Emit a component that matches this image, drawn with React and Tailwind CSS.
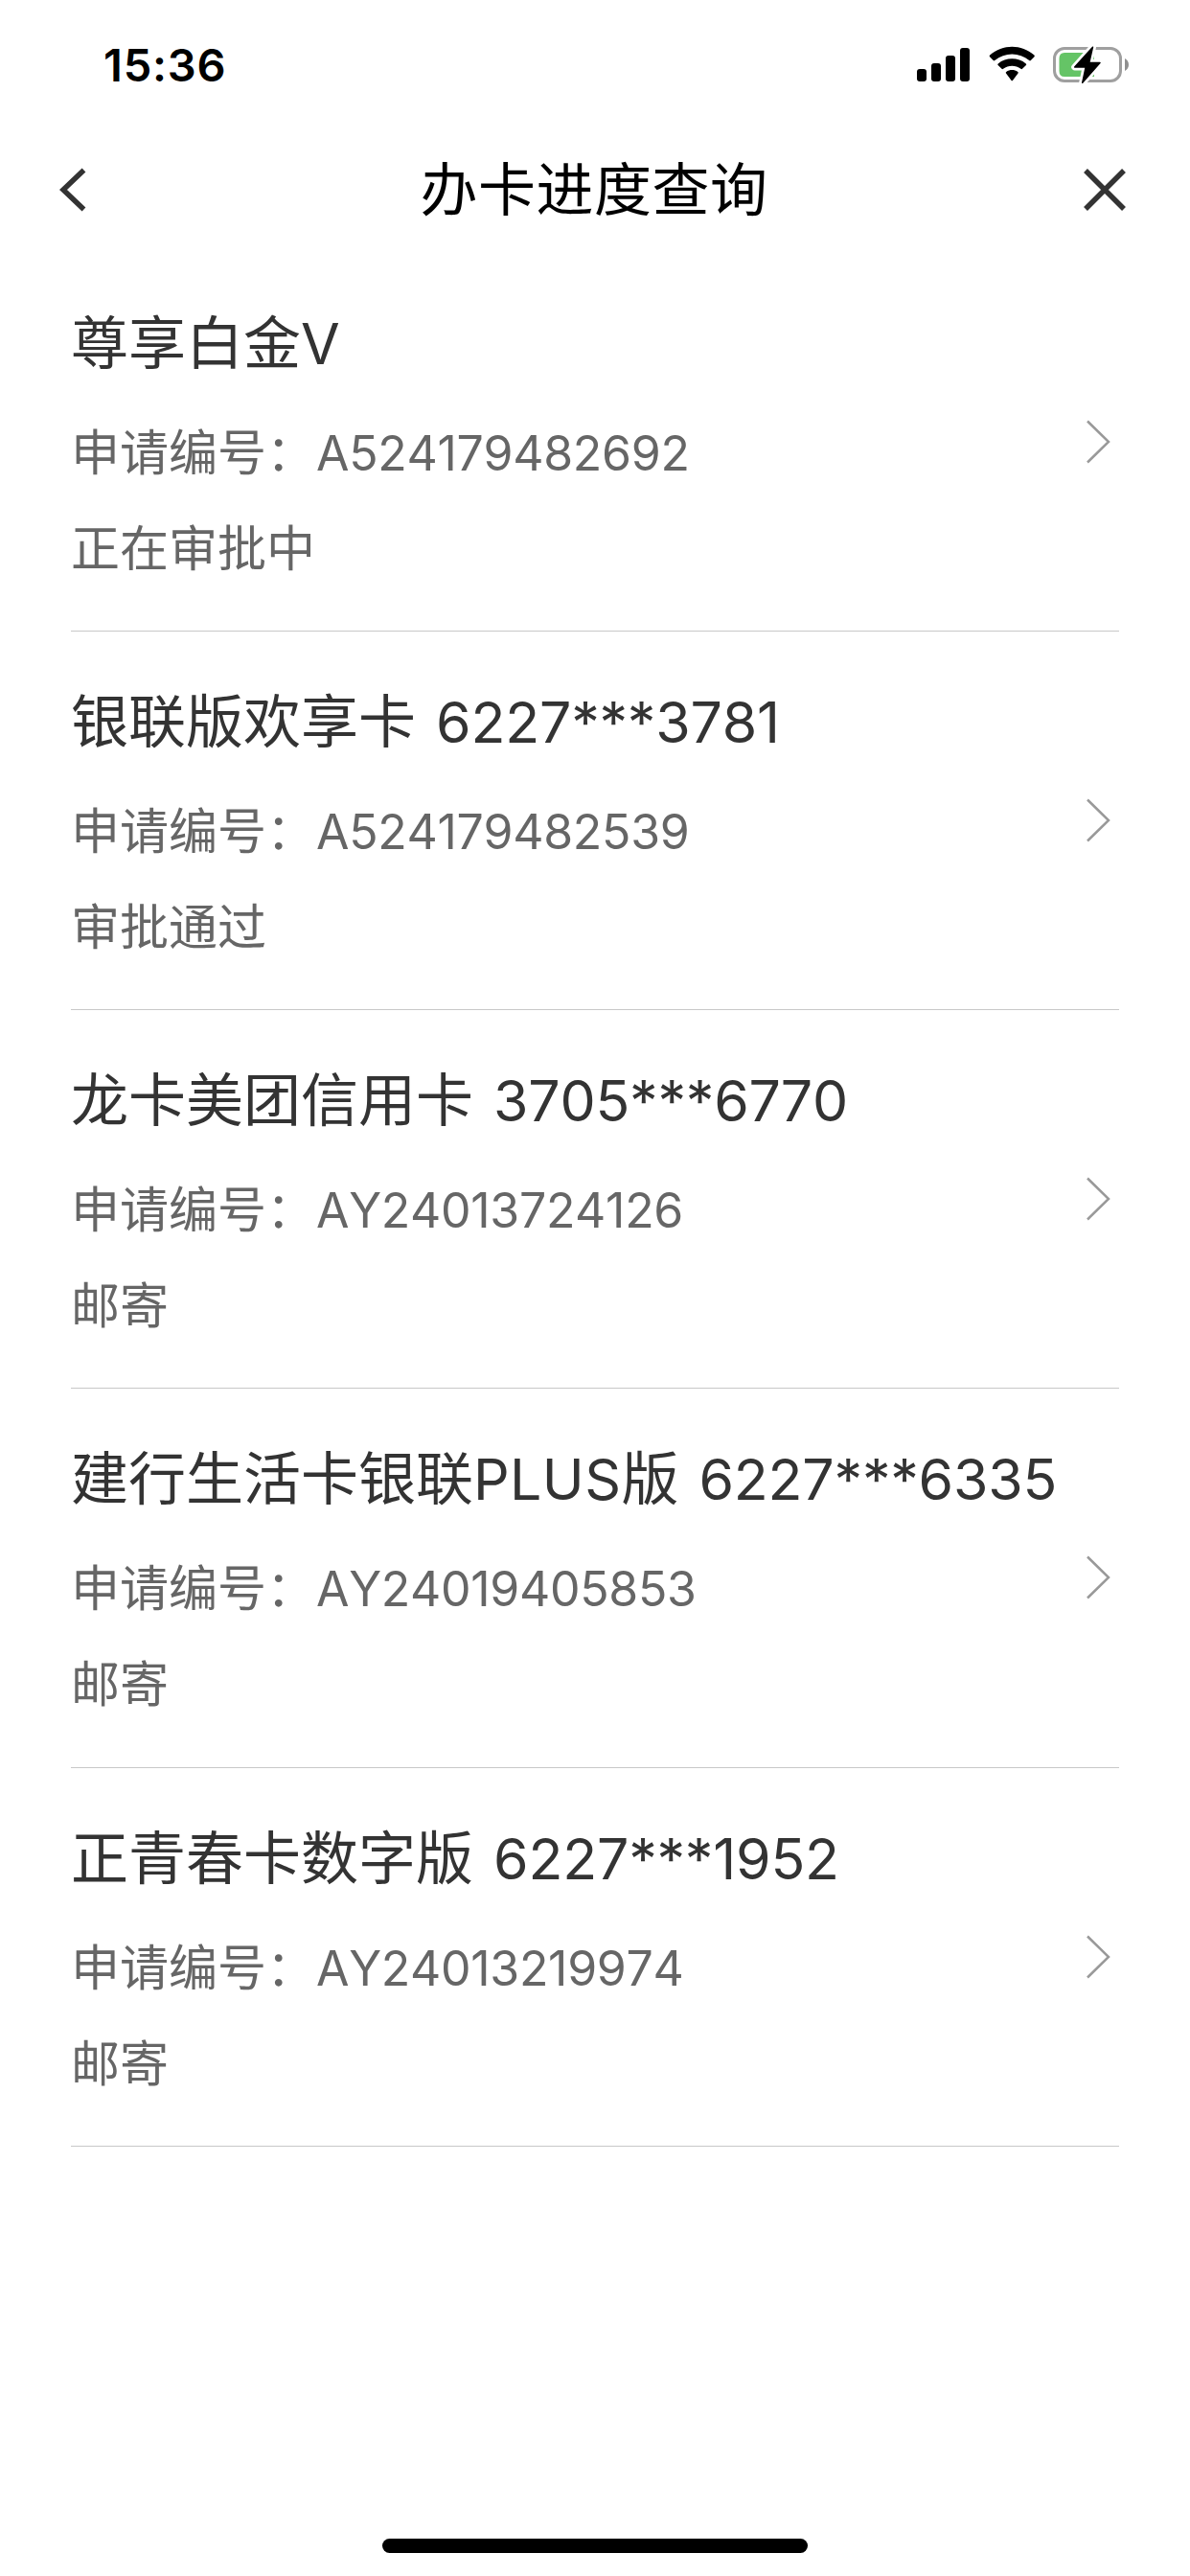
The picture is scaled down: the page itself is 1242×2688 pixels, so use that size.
const cards = [
  { title: "尊享白金", latin: "V", no: "A524179482692", status: "正在审批中" },
  { title: "银联版欢享卡", mask: "6227***3781", no: "A524179482539", status: "审批通过" },
  { title: "龙卡美团信用卡", mask: "3705***6770", no: "AY24013724126", status: "邮寄" },
  { title: "建行生活卡银联", latin: "PLUS", tail: "版", mask: "6227***6335", no: "AY24019405853", status: "邮寄" },
  { title: "正青春卡数字版", mask: "6227***1952", no: "AY24013219974", status: "邮寄" },
];

export default function App() {
  return (
    <div className="w-[1242px] h-[2688px] bg-white flex flex-col overflow-hidden font-['Inter','Noto_Sans_CJK_SC',sans-serif]">
      <StatusBar />
      <NavBar />
      <main className="flex-1 pl-[74px] pr-[74px]">
        {cards.map((c) => (
          <CardRow key={c.no} card={c} />
        ))}
      </main>
      <div className="w-[444px] h-[15px] mb-[24px] mx-auto rounded-full bg-black shrink-0" />
    </div>
  );
}

function StatusBar() {
  return (
    <header className="h-[132px] shrink-0 flex items-start justify-between pl-[108px] pr-[62px]">
      <span className="mt-[38px] text-[47px] leading-[60px] font-semibold tracking-[0.8px] text-black">15:36</span>
      <div className="mt-[48px] flex">
        <svg width="56" height="40" viewBox="0 0 56 40" className="mr-[19px]">
          <rect x="0" y="24" width="10" height="13" rx="3" />
          <rect x="15" y="18" width="10" height="19" rx="3" />
          <rect x="30" y="10" width="10" height="27" rx="3" />
          <rect x="45" y="2" width="10" height="35" rx="3" />
        </svg>
        <svg width="50" height="40" viewBox="0 0 50 40" className="mr-[17px]">
          <path d="M1 11.2 Q0.3 10.4 1.1 9.6 C14.5 -2.2 34 -2.2 47.4 9.6 Q48.2 10.4 47.5 11.2 L43.8 15 Q43 15.8 42.2 15 C32 6.2 16.5 6.2 6.3 15 Q5.5 15.8 4.7 15 Z" />
          <path d="M9.6 20 Q8.8 19.2 9.7 18.4 C18 11.6 30.5 11.6 38.8 18.4 Q39.7 19.2 38.9 20 L35 23.8 Q34.3 24.5 33.4 23.8 C28 19.6 20.5 19.6 15.1 23.8 Q14.2 24.5 13.5 23.8 Z" />
          <path d="M18 28.4 Q17.3 27.6 18.2 27 C21.8 24.4 26.7 24.4 30.3 27 Q31.2 27.6 30.5 28.4 L25.1 35.8 Q24.25 36.8 23.4 35.8 Z" />
        </svg>
        <svg width="81" height="40" viewBox="0 0 81 40">
          <rect x="1.5" y="2.5" width="69" height="34" rx="10.5" fill="none" stroke="#9f9f9f" strokeWidth="3" />
          <path d="M75 13 C80.3 15.5 80.3 23.5 75 26 Z" fill="#8f8f8f" />
          <path d="M12 7 H43 V32 H12 Q6.5 32 6.5 26 V13 Q6.5 7 12 7 Z" fill="#65c466" />
          <path d="M41.5 1.2 L22.7 22 H34.2 L30.7 38.3 L49 17.5 H37.7 Z" fill="#fff" stroke="#fff" strokeWidth="7" strokeLinejoin="round" />
          <path d="M41.5 1.2 L22.7 22 H34.2 L30.7 38.3 L49 17.5 H37.7 Z" fill="#000" stroke="#000" strokeWidth="1.5" strokeLinejoin="round" />
        </svg>
      </div>
    </header>
  );
}

function NavBar() {
  return (
    <nav className="h-[131.8px] shrink-0 flex items-center justify-between pl-[60px] pr-[66px]">
      <svg width="48" height="48" viewBox="0 0 48 48" fill="none" stroke="#333" strokeWidth="5.5">
        <path d="M27.5 3.5 L6 24 L27.5 44.5" />
      </svg>
      <h1 className="ml-[4px] text-[60px] leading-[84px] tracking-[0.5px] text-black">办卡进度查询</h1>
      <svg width="48" height="48" viewBox="0 0 48 48" fill="none" stroke="#333" strokeWidth="5.5">
        <path d="M5 4 L45 44 M45 4 L5 44" />
      </svg>
    </nav>
  );
}

function CardRow({ card }) {
  return (
    <section className="h-[395.2px] border-b border-[#c8c8c8] flex items-center justify-between">
      <div className="h-full pt-[52px] whitespace-nowrap">
        <h2 className="text-[60px] leading-[84px] text-[#333]">
          {card.title}
          {card.latin && <span className="text-[59px] tracking-[0.4px]">{card.latin}</span>}
          {card.tail}
          {card.mask && (
            <span className="ml-[21px] text-[59px] tracking-[-0.2px] [font-kerning:none]">{card.mask}</span>
          )}
        </h2>
        <p className="mt-[22px] text-[51px] leading-[100px] text-[#666]">
          申请编号：<span className="ml-[1px] text-[50px] tracking-[-0.3px] [font-kerning:none]">{card.no}</span>
        </p>
        <p className="text-[51px] leading-[100px] text-[#666]">{card.status}</p>
      </div>
      <svg width="28" height="48" viewBox="0 0 28 48" fill="none" stroke="#999" strokeWidth="2.5" className="mr-[8px] shrink-0">
        <path d="M3 2.5 L25 24 L3 45.5" />
      </svg>
    </section>
  );
}
